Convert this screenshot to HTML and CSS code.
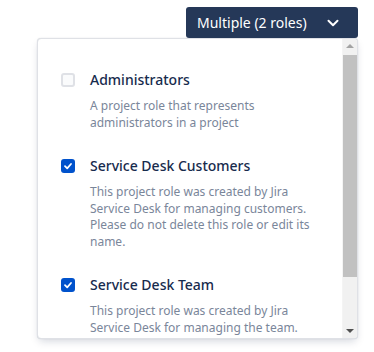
FILE: index.html
```html
<!DOCTYPE html>
<html lang="en">
<head>
<meta charset="utf-8">
<title>Roles</title>
<link rel="stylesheet" href="styles.css">
</head>
<body>
<div class="wrap">
  <div class="bar">
    <button class="trigger">
      <span class="trigger-label">Multiple (2 roles)</span>
      <svg class="chev" width="14" height="14" viewBox="0 0 14 14"><path d="M2.5 4.8 L7 9.2 L11.5 4.8" fill="none" stroke="#fff" stroke-width="2" stroke-linecap="round" stroke-linejoin="round"/></svg>
    </button>
  </div>
  <div class="panel">
    <div class="list">
      <div class="item">
        <span class="box"></span>
        <div class="text">
          <div class="title">Administrators</div>
          <div class="desc">A project role that represents administrators in a project</div>
        </div>
      </div>
      <div class="item">
        <span class="box checked"><svg width="10" height="10" viewBox="0 0 10 10"><path d="M2 5.2 L4.2 7.3 L8 3" fill="none" stroke="#fff" stroke-width="1.8" stroke-linecap="round" stroke-linejoin="round"/></svg></span>
        <div class="text">
          <div class="title">Service Desk Customers</div>
          <div class="desc">This project role was created by Jira Service Desk for managing customers. Please do not delete this role or edit its name.</div>
        </div>
      </div>
      <div class="item">
        <span class="box checked"><svg width="10" height="10" viewBox="0 0 10 10"><path d="M2 5.2 L4.2 7.3 L8 3" fill="none" stroke="#fff" stroke-width="1.8" stroke-linecap="round" stroke-linejoin="round"/></svg></span>
        <div class="text">
          <div class="title">Service Desk Team</div>
          <div class="desc">This project role was created by Jira Service Desk for managing the team.</div>
        </div>
      </div>
    </div>
    <div class="scrollbar">
      <div class="arrow up"></div>
      <div class="track"><div class="thumb"></div></div>
      <div class="arrow down"></div>
    </div>
  </div>
</div>
</body>
</html>
```
FILE: styles.css
```css
html, body {
  margin: 0;
  padding: 0;
  background: #fff;
}
body {
  font-family: "Noto Sans", "Open Sans", sans-serif;
  width: 374px;
  height: 352px;
  overflow: hidden;
}
.wrap {
  padding: 7px 16px 0 37px;
}
.bar {
  display: flex;
  justify-content: flex-end;
}
.trigger {
  display: flex;
  align-items: center;
  justify-content: space-between;
  width: 172px;
  height: 31px;
  padding: 0 18px 0 11px;
  border: none;
  border-radius: 3px;
  background: #253858;
  color: #fff;
  font-family: inherit;
  font-size: 14px;
  box-sizing: border-box;
}
.chev { display: block; }
.panel {
  display: flex;
  height: 301px;
  box-sizing: border-box;
  border: 1px solid #dfe1e6;
  border-radius: 4px;
  box-shadow: 0 4px 8px -2px rgba(9,30,66,0.18), 0 0 1px rgba(9,30,66,0.2);
  overflow: hidden;
  background: #fff;
}
.list {
  flex: 1;
  padding: 31px 16px 0 23px;
  overflow: hidden;
}
.item {
  display: flex;
  gap: 15px;
  margin-bottom: 25px;
}
.box {
  flex: none;
  width: 14px;
  height: 14px;
  margin-top: 3px;
  box-sizing: border-box;
  border: 2px solid #dfe1e6;
  border-radius: 3px;
  background: #fafbfc;
  display: flex;
  align-items: center;
  justify-content: center;
}
.box.checked {
  border: none;
  background: #0052cc;
}
.title {
  font-size: 14px;
  line-height: 20px;
  font-weight: 500;
  color: #172b4d;
  margin-bottom: 8px;
}
.desc {
  font-size: 12px;
  line-height: 16.5px;
  color: #7a869a;
}
.scrollbar {
  flex: none;
  width: 14px;
  display: flex;
  flex-direction: column;
  background: #f1f1f1;
  border-left: 1px solid #f4f4f4;
}
.arrow {
  height: 16px;
  position: relative;
}
.arrow::after {
  content: "";
  position: absolute;
  left: 3px;
  border-left: 4px solid transparent;
  border-right: 4px solid transparent;
}
.arrow.up::after {
  top: 5px;
  border-bottom: 4px solid #a3a3a3;
}
.arrow.down::after {
  top: 7px;
  border-top: 4px solid #505050;
}
.track {
  flex: 1;
}
.thumb {
  height: 222px;
  background: #c1c1c1;
}
```
